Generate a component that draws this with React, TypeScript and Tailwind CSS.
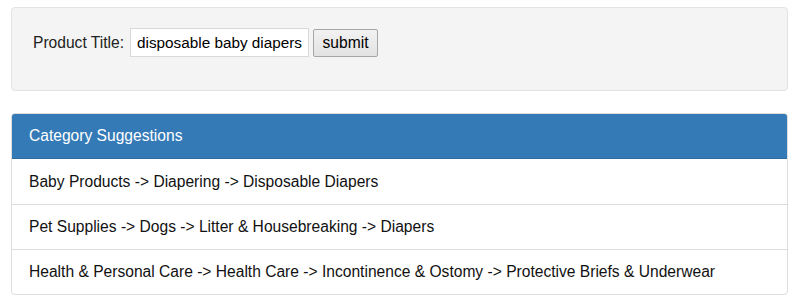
const suggestions = [
  "Baby Products -> Diapering -> Disposable Diapers",
  "Pet Supplies -> Dogs -> Litter & Housebreaking -> Diapers",
  "Health & Personal Care -> Health Care -> Incontinence & Ostomy -> Protective Briefs & Underwear",
];

export default function App() {
  return (
    <div
      className="w-[800px] h-[307px] bg-white pl-[11px] pr-[12px] pt-[7px] text-[#333] text-[15.6px]"
      style={{ fontFamily: '"Liberation Sans", Arial, sans-serif' }}
    >
      {/* Search form */}
      <div className="h-[84px] bg-[#f4f4f4] border border-[#e3e3e3] rounded-[4px] pl-[21px] pt-[20px]">
        <form className="flex items-center" onSubmit={(e) => e.preventDefault()}>
          <label className="w-[97px] leading-[29px] text-[#222]">Product Title:</label>
          <input
            type="text"
            defaultValue="disposable baby diapers"
            className="w-[179px] h-[29px] pl-[6px] pr-[2px] border border-[#d9d9d9] bg-white text-[15.3px] text-black outline-none"
          />
          <button
            type="submit"
            className="ml-[4px] w-[65px] h-[28px] mt-[1px] border border-[#a6a6a6] rounded-[2px] bg-gradient-to-b from-[#f2f2f2] to-[#e2e2e2] text-[15.6px] text-black"
          >
            submit
          </button>
        </form>
      </div>

      {/* Suggestions panel */}
      <div className="mt-[22px] border border-[#dddddd] rounded-[4px] overflow-hidden">
        <div className="h-[46px] -mt-px -mx-px border border-[#2e6da4] bg-[#337ab7] text-white flex items-center pl-[17px] rounded-t-[4px]">
          Category Suggestions
        </div>
        <ul>
          {suggestions.map((s, i) => (
            <li
              key={i}
              className={`h-[45px] flex items-center pl-[17px] text-[#111] ${
                i > 0 ? "border-t border-[#dddddd]" : ""
              }`}
            >
              {s}
            </li>
          ))}
        </ul>
      </div>
    </div>
  );
}
